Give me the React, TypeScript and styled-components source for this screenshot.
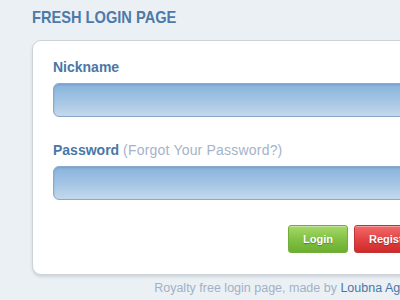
import React from "react";
import styled, { createGlobalStyle } from "styled-components";

const Global = createGlobalStyle`
  html, body { margin: 0; padding: 0; }
  body {
    background: #ebf0f4;
    overflow: hidden;
    font-family: "Liberation Sans", Arial, sans-serif;
  }
`;

const Page = styled.div`
  width: 417px;
  padding: 8px 0 0 32px;
`;

const Title = styled.h1`
  margin: 0 0 13px 0;
  font-family: "Liberation Sans", Arial, sans-serif;
  font-size: 17px;
  line-height: 19px;
  font-weight: bold;
  color: #4d7aa9;
  transform: scaleX(0.86);
  transform-origin: left center;
  white-space: nowrap;
`;

const Panel = styled.form`
  box-sizing: border-box;
  background: #ffffff;
  border: 1px solid #cdd2d6;
  border-radius: 9px;
  box-shadow: 0 2px 3px rgba(120, 135, 150, 0.25);
  padding: 18px 20px 21px 20px;
  display: flex;
  flex-direction: column;
`;

const Label = styled.label`
  font-size: 14px;
  line-height: 16px;
  font-weight: bold;
  color: #4a77a6;
  margin-bottom: 8px;
`;

const Hint = styled.span`
  font-weight: normal;
  color: #a4b3c8;
  letter-spacing: 0.2px;
`;

const Field = styled.div<{ $gap: number }>`
  box-sizing: border-box;
  height: 34px;
  border: 1px solid #8ea8c8;
  border-radius: 6px;
  background: linear-gradient(to bottom, #88b4dc 0%, #a6c6e4 55%, #c3d9ed 100%);
  box-shadow: inset 0 1px 2px rgba(60, 100, 150, 0.25);
  margin-bottom: ${(p) => p.$gap}px;
`;

const Actions = styled.div`
  display: flex;
  justify-content: flex-end;
  gap: 6px;
`;

const Button = styled.button<{ $tone: "green" | "red" }>`
  box-sizing: border-box;
  height: 28px;
  padding: 0 14px;
  border-radius: 3px;
  font-family: "Liberation Sans", Arial, sans-serif;
  font-size: 11px;
  font-weight: bold;
  color: #ffffff;
  text-shadow: 0 1px 1px rgba(0, 0, 0, 0.3);
  border: 1px solid ${(p) => (p.$tone === "green" ? "#6fae3a" : "#c23535")};
  background: ${(p) =>
    p.$tone === "green"
      ? "linear-gradient(to bottom, #a6d86a 0%, #82c244 50%, #6cae2f 100%)"
      : "linear-gradient(to bottom, #f26b6b 0%, #e34444 50%, #cf2a2a 100%)"};
  box-shadow: inset 0 1px 0 rgba(255, 255, 255, 0.35);
`;

const Footer = styled.p`
  margin: 6px 0 0 0;
  padding-right: 21px;
  text-align: right;
  font-size: 12.5px;
  line-height: 14px;
  color: #a3b1c6;
  white-space: nowrap;
`;

const Credit = styled.a`
  color: #4a77a6;
  text-decoration: none;
`;

export default function App() {
  return (
    <>
      <Global />
      <Page>
        <Title>FRESH LOGIN PAGE</Title>
        <Panel>
          <Label>Nickname</Label>
          <Field $gap={25} />
          <Label>
            Password <Hint>(Forgot Your Password?)</Hint>
          </Label>
          <Field $gap={25} />
          <Actions>
            <Button type="button" $tone="green">Login</Button>
            <Button type="button" $tone="red">Register</Button>
          </Actions>
        </Panel>
        <Footer>
          Royalty free login page, made by <Credit href="#">Loubna Aggoun</Credit>
        </Footer>
      </Page>
    </>
  );
}
